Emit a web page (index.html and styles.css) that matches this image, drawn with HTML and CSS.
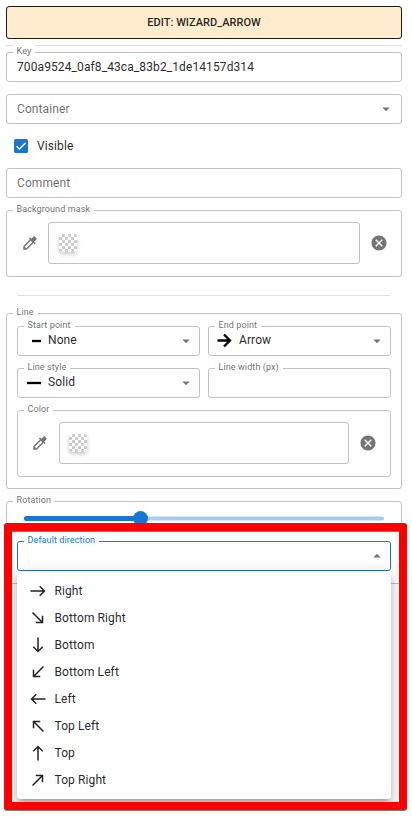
FILE: index.html
```
<!DOCTYPE html>
<html lang="en">
<head>
<meta charset="utf-8">
<title>Edit: wizard_arrow</title>
<link rel="stylesheet" href="styles.css">
</head>
<body>
<svg class="defs">
  <symbol id="down" viewBox="0 0 24 24"><path d="M7 10l5 5 5-5z"/></symbol>
  <symbol id="picker" viewBox="0 0 24 24"><path d="m20.71 5.63-2.34-2.34a.996.996 0 0 0-1.41 0l-3.12 3.12-1.93-1.91-1.41 1.41 1.42 1.42L3 16.25V21h4.75l8.92-8.92 1.42 1.42 1.41-1.41-1.92-1.92 3.12-3.12c.4-.4.4-1.03.01-1.42M6.92 19 5 17.08l8.06-8.06 1.92 1.92z"/></symbol>
  <symbol id="cancel" viewBox="0 0 24 24"><path d="M12 2C6.47 2 2 6.47 2 12s4.47 10 10 10 10-4.470 10-10S17.530 2 12 2m5 13.590L15.590 17 12 13.410 8.410 17 7 15.590 10.590 12 7 8.410 8.410 7 12 10.590 15.590 7 17 8.410 13.410 12z"/></symbol>
  <symbol id="east" viewBox="0 0 24 24"><path d="m15 5-1.410 1.410L18.170 11H2v2h16.170l-4.590 4.590L15 19l7-7z"/></symbol>
  <symbol id="southeast" viewBox="0 0 24 24"><path d="M19 9h-2v6.590L5.410 4 4 5.410 15.590 17H9v2h10z"/></symbol>
</svg>
<main class="panel">
  <button class="title">EDIT: WIZARD_ARROW</button>
  <hr class="rule">
  <div class="field"><span class="label">Key</span><span class="value">700a9524_0af8_43ca_83b2_1de14157d314</span></div>
  <div class="field"><span class="placeholder">Container</span><svg class="caret"><use href="#down"/></svg></div>
  <div class="check-row">
    <svg class="check" viewBox="0 0 14 14"><rect width="14" height="14" rx="1.500"/><path d="M2.600 7.200 5.500 10 11.500 4"/></svg>
    <span>Visible</span>
  </div>
  <div class="field"><span class="placeholder">Comment</span></div>
  <div class="group color-row">
    <span class="label">Background mask</span>
    <svg class="tool"><use href="#picker"/></svg>
    <div class="color-box"><span class="swatch"></span></div>
    <svg class="tool"><use href="#cancel"/></svg>
  </div>
  <hr class="rule inset">
  <section class="group line-group">
    <span class="label">Line</span>
    <div class="field"><span class="label">Start point</span><svg class="mark" viewBox="0 0 16 16"><path d="M6 9h9"/></svg><span class="value raised">None</span><svg class="caret"><use href="#down"/></svg></div>
    <div class="field"><span class="label">End point</span><svg class="mark arrow" viewBox="0 0 16 16"><path d="M.5 8.500h12M7 2.500l6 6-6 6"/></svg><span class="value raised">Arrow</span><svg class="caret"><use href="#down"/></svg></div>
    <div class="field"><span class="label">Line style</span><svg class="mark" viewBox="0 0 16 16"><path d="M1 9h14"/></svg><span class="value raised">Solid</span><svg class="caret"><use href="#down"/></svg></div>
    <div class="field"><span class="label">Line width (px)</span></div>
    <div class="group color-row wide">
      <span class="label">Color</span>
      <svg class="tool"><use href="#picker"/></svg>
      <div class="color-box"><span class="swatch"></span></div>
      <svg class="tool"><use href="#cancel"/></svg>
    </div>
  </section>
  <section class="group rotation">
    <span class="label">Rotation</span>
    <div class="slider"><span class="track"></span><span class="thumb"></span></div>
  </section>
  <section class="group direction">
    <div class="field focused"><span class="label">Default direction</span><svg class="caret up"><use href="#down"/></svg>
      <ul class="menu">
        <li><svg><use href="#east"/></svg>Right</li>
        <li><svg><use href="#southeast"/></svg>Bottom Right</li>
        <li><svg class="r90"><use href="#east"/></svg>Bottom</li>
        <li><svg class="r90"><use href="#southeast"/></svg>Bottom Left</li>
        <li><svg class="r180"><use href="#east"/></svg>Left</li>
        <li><svg class="r180"><use href="#southeast"/></svg>Top Left</li>
        <li><svg class="r270"><use href="#east"/></svg>Top</li>
        <li><svg class="r270"><use href="#southeast"/></svg>Top Right</li>
      </ul>
    </div>
  </section>
  <div class="highlight"></div>
</main>
</body>
</html>
```
FILE: styles.css
```
* { box-sizing: border-box; }
body {
  margin: 0;
  background: #fff;
  color: rgba(0, 0, 0, .87);
  font: 12px/18px Roboto, sans-serif;
  letter-spacing: .1px;
}
.defs { display: none; }
.panel {
  position: relative;
  width: 412px;
  height: 817px;
  padding: 6px 10px 0 6px;
  overflow: hidden;
}
.title {
  display: block;
  width: 100%;
  height: 33px;
  padding: 0;
  border: 1px solid #1c1a17;
  border-radius: 3px;
  background: #ffebcd;
  color: rgba(0, 0, 0, .87);
  font: 500 11px/31px Roboto, sans-serif;
  letter-spacing: .03px;
}
.rule {
  height: 1px;
  margin: 6px 0;
  border: 0;
  background: #e0e0e0;
}
.rule.inset { margin: 18px 12px 17px 11px; }
.field, .group {
  position: relative;
  border: 1px solid #c2c2c2;
  border-radius: 3px;
}
.field {
  display: flex;
  align-items: center;
  height: 30px;
  padding: 0 6px 0 10px;
}
.field + .field { margin-top: 12px; }
.label {
  position: absolute;
  top: -9px;
  left: 6px;
  padding: 0 4px 0 3.5px;
  background: #fff;
  color: rgba(0, 0, 0, .6);
  font-size: 9px;
  line-height: 14px;
  letter-spacing: .1px;
  white-space: nowrap;
}
.placeholder { color: rgba(0, 0, 0, .6); }
.caret {
  width: 18px;
  height: 18px;
  margin-left: auto;
  fill: rgba(0, 0, 0, .54);
}
.check-row {
  display: flex;
  align-items: center;
  gap: 9px;
  height: 44px;
  padding-left: 8px;
}
.check { width: 14px; height: 14px; fill: #1976d2; }
.check path { fill: none; stroke: #fff; stroke-width: 1.5; }
.color-row {
  display: flex;
  align-items: center;
  height: 67px;
  margin-top: 12px;
  padding: 0 13px 1px 14px;
}
.tool { width: 18px; height: 18px; flex: none; fill: rgba(0, 0, 0, .54); }
.color-box {
  flex: 1;
  display: flex;
  align-items: center;
  height: 42px;
  margin: 0 10px 0 9px;
  padding-left: 10px;
  border: 1px solid #c2c2c2;
  border-radius: 3px;
}
.swatch {
  width: 18px;
  height: 18px;
  border-radius: 3px;
  background: repeating-conic-gradient(#ccc 0 25%, #fff 0 50%) 0 0 / 6px 6px;
  box-shadow: 0 2px 4px rgba(0, 0, 0, .22);
}
.line-group {
  display: grid;
  grid-template-columns: 183px 183px;
  gap: 12px 8px;
  height: 176px;
  padding: 12px 10px;
}
.line-group .field { margin: 0; padding-right: 4px; }
.line-group .wide { grid-column: 1 / 3; margin: 0; padding-left: 13px; }
.wide .color-box { margin-left: 10px; padding-left: 9px; }
.mark {
  position: relative;
  top: -1px;
  width: 16px;
  height: 16px;
  margin-right: 6px;
  margin-left: -2px;
  fill: none;
  stroke: #000;
  stroke-width: 2.3;
}
.raised { position: relative; top: -1px; }
.rotation { height: 40px; margin-top: 12px; padding: 14px 17px 0; }
.slider {
  display: flex;
  align-items: center;
  position: relative;
  height: 5px;
  border-radius: 3px;
  background: linear-gradient(#d3e4f6 0 1px, #a7caed 1px 4px, #d3e4f6 4px);
}
.track { width: 116px; height: 5px; border-radius: 3px; background: #1976d2; }
.thumb {
  width: 15px;
  height: 15px;
  flex: none;
  margin-left: -7.5px;
  border-radius: 50%;
  background: #1976d2;
}
.direction { height: 56px; margin-top: -13px; padding: 12px 10px; background: #fff; }
.focused { padding-right: 4px; border-color: #1976d2; }
.focused .label { color: #1976d2; }
.up { transform: rotate(180deg); }
.menu {
  position: absolute;
  top: 29px;
  left: -1px;
  right: -1px;
  height: 228px;
  margin: 0;
  padding: 6px 12px;
  list-style: none;
  border-radius: 3px;
  background: #fff;
  box-shadow: 0 5px 5px -3px rgba(0, 0, 0, .2), 0 8px 10px 1px rgba(0, 0, 0, .14), 0 3px 14px 2px rgba(0, 0, 0, .12);
}
.menu li { display: flex; align-items: center; gap: 7.5px; height: 27px; }
.menu svg { width: 18px; height: 18px; fill: rgba(0, 0, 0, .87); }
.r90 { transform: rotate(90deg); }
.r180 { transform: rotate(180deg); }
.r270 { transform: rotate(270deg); }
.highlight {
  position: absolute;
  top: 523px;
  left: 4px;
  width: 403px;
  height: 287px;
  border: 8px solid #f00;
  border-radius: 3px;
  filter: drop-shadow(0 1px 0 #808080);
}
```
